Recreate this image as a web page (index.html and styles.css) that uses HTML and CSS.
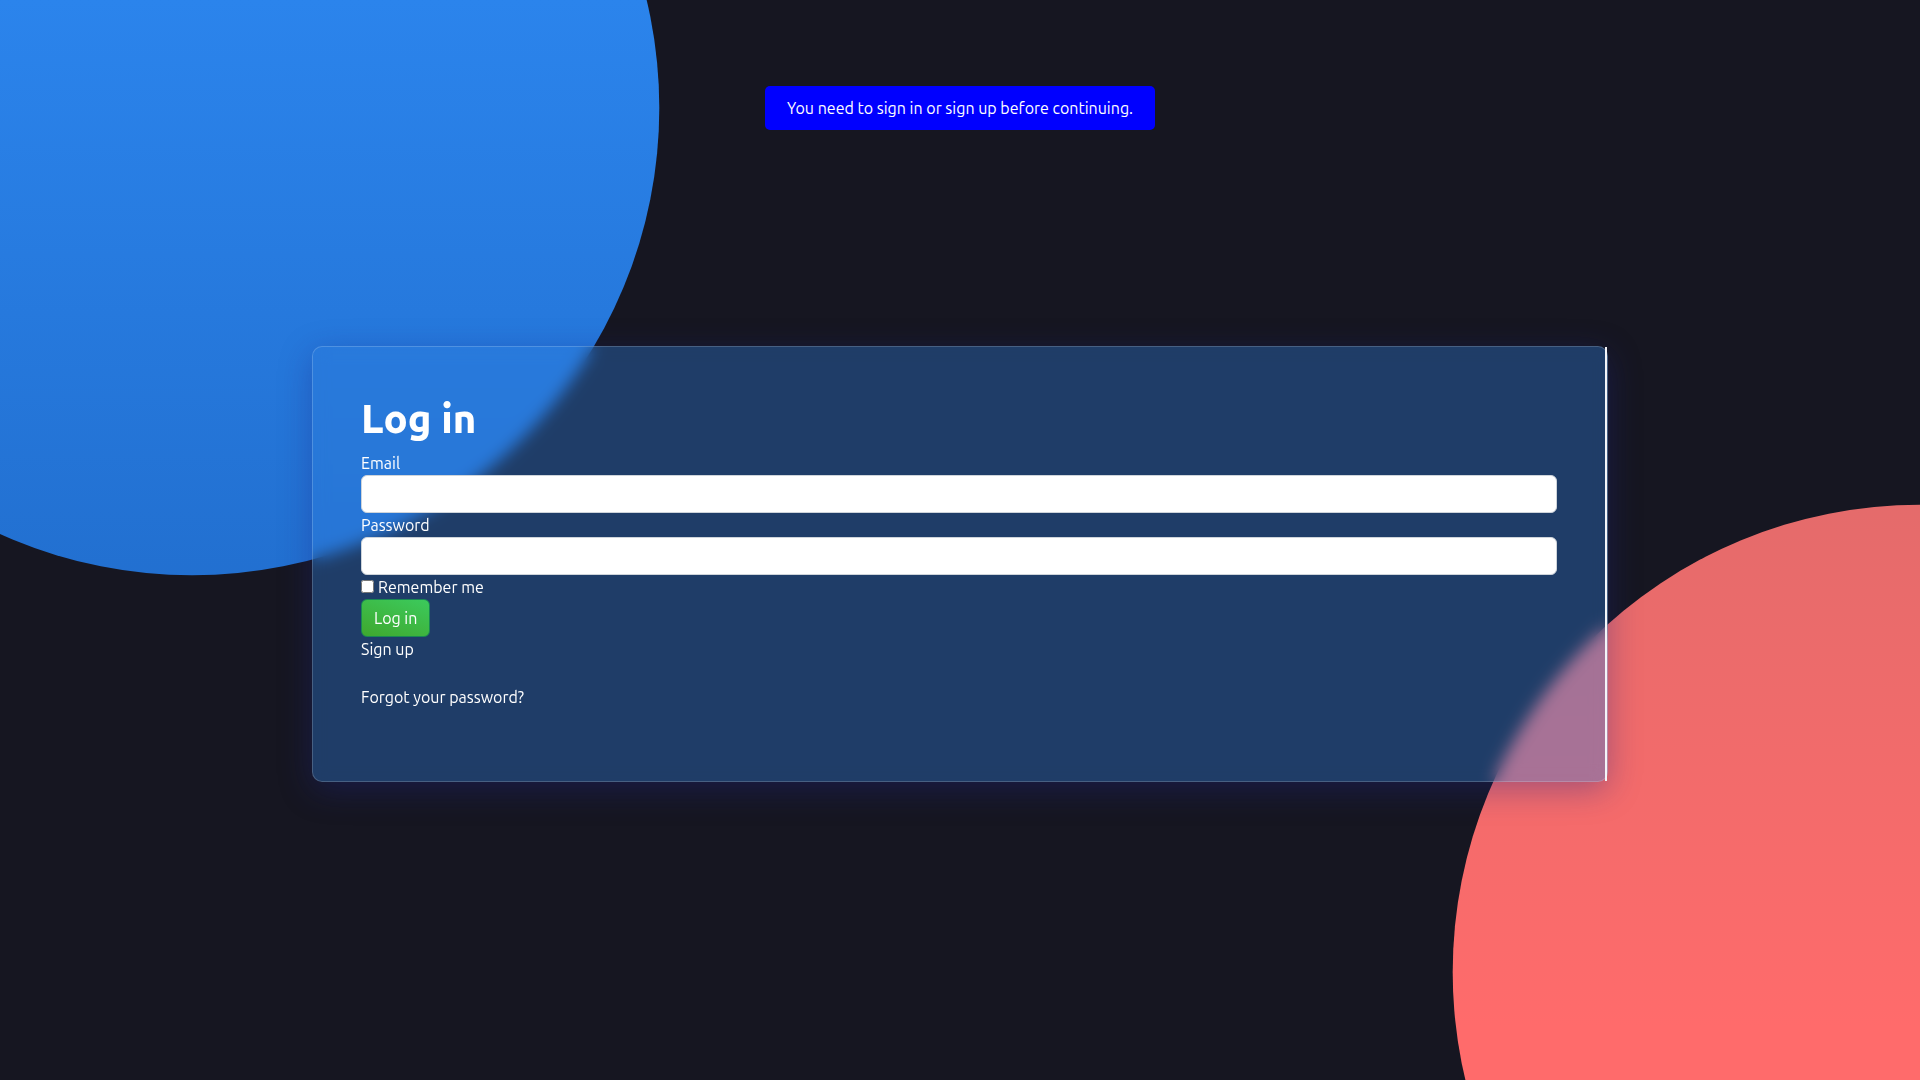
FILE: index.html
```html
<!DOCTYPE html>
<html lang="en">
<head>
<meta charset="utf-8">
<meta name="viewport" content="width=device-width, initial-scale=1">
<title>Log in</title>
<link rel="stylesheet" href="styles.css">
</head>
<body>
<p class="notice" role="alert">You need to sign in or sign up before continuing.</p>
<main class="container">
  <section class="card">
    <h1 class="card-title">Log in</h1>
    <form class="login-form">
      <label for="email">Email</label>
      <input class="form-control" type="email" id="email">
      <label for="password">Password</label>
      <input class="form-control" type="password" id="password">
      <div class="remember">
        <input type="checkbox" id="remember">
        <label for="remember">Remember me</label>
      </div>
      <button class="btn" type="submit">Log in</button>
    </form>
    <nav class="links">
      <a href="#signup">Sign up</a>
      <a href="#forgot">Forgot your password?</a>
    </nav>
  </section>
</main>
</body>
</html>
```
FILE: styles.css
```css
*, *::before, *::after {
  box-sizing: border-box;
}

body {
  margin: 0;
  min-height: 100vh;
  padding-top: 86px;
  background: #161621;
  color: #fff;
  font: 400 16px/24px Ubuntu, "Open Sans", sans-serif;
  display: flex;
  flex-direction: column;
  align-items: center;
}

/* Two discs behind the page */
body::before,
body::after {
  content: "";
  position: fixed;
  inset: 0;
  z-index: -1;
}

body::before {
  background: linear-gradient(#2b84ec, #1a5eb8);
  clip-path: circle(30% at 10% 10%);
}

body::after {
  background: linear-gradient(#cb6b6b, #ff6b6b 95%);
  clip-path: circle(30% at right 90%);
}

.notice {
  margin: 0;
  padding: 10px 22px;
  border-radius: 5px;
  background: #00f;
}

.container {
  width: 100%;
  max-width: 1320px;
  margin: auto 0;
  padding: 0 12px 82px;
}

.card {
  position: relative;
  padding: 48px 50px 48px 48px;
  border: 1px solid rgba(255, 255, 255, 0.18);
  border-radius: 10px;
  background: rgba(48, 126, 221, 0.38);
  box-shadow: 0 8px 32px rgba(31, 38, 135, 0.37);
  backdrop-filter: blur(8px);
}

/* Bright line down the right edge */
.card::after {
  content: "";
  position: absolute;
  top: 0;
  right: 0;
  width: 2px;
  height: 100%;
  background: #f4f5f8;
}

.card-title {
  margin: 0 0 8px;
  font-size: 40px;
  line-height: 48px;
  font-weight: 800;
}

.login-form {
  display: flex;
  flex-direction: column;
}

.form-control {
  width: 100%;
  height: 38px;
  padding: 6px 12px;
  border: 1px solid #ced4da;
  border-radius: 6px;
  background: #fff;
  color: #212529;
  font: inherit;
}

.remember {
  display: flex;
  align-items: baseline;
  gap: 4px;
}

.remember input {
  width: 13px;
  height: 13px;
  margin: 0;
}

.btn {
  align-self: flex-start;
  height: 38px;
  padding: 6px 12px;
  border: 1px solid #198754;
  border-radius: 6px;
  background: linear-gradient(19deg, #3fa82e, #3cca5c);
  color: #fff;
  font: inherit;
}

.links {
  display: flex;
  flex-direction: column;
  align-items: flex-start;
  gap: 24px;
  padding-bottom: 24px;
}

.links a {
  color: #fff;
  text-decoration: none;
}
```
